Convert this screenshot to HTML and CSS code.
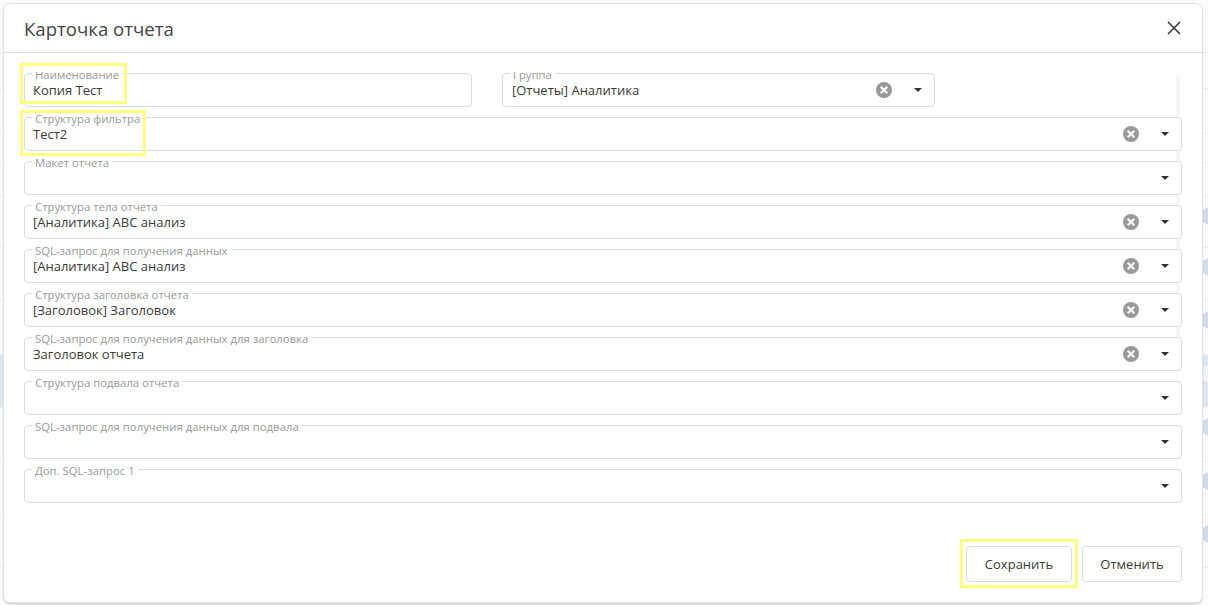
FILE: index.html
```html
<!DOCTYPE html>
<html lang="ru">
<head>
<meta charset="utf-8">
<title>Карточка отчета</title>
<link rel="stylesheet" href="styles.css">
</head>
<body>
<div class="backdrop">
  <div class="bg-row h53"></div><div class="bg-row h36"></div><div class="bg-row h45"></div><div class="bg-row h29"></div><div class="bg-row h34"></div>
  <div class="bg-row h51 dot"></div><div class="bg-row h53 dot"></div><div class="bg-row h54 dot"></div><div class="bg-row h53 band dot"></div><div class="bg-row h54 dot"></div><div class="bg-row h53 dot"></div><div class="bg-row h53 dot"></div>
</div>
<main class="dialog">
  <header class="dialog-head">
    <h1 class="dialog-title">Карточка отчета</h1>
    <svg class="close" width="14" height="14" viewBox="0 0 14 14"><path d="M1 1L13 13M13 1L1 13" fill="none" stroke="#333" stroke-width="1.5"/></svg>
  </header>
  <div class="dialog-body">
    <div class="scroll-track"></div>
    <div class="row">
      <div class="field name"><span class="label">Наименование</span><span class="value">Копия Тест</span></div>
      <div class="field group"><span class="label">Группа</span><span class="value">[Отчеты] Аналитика</span>
        <svg class="clear" width="16" height="16" viewBox="0 0 16 16"><circle cx="8" cy="8" r="8" fill="#999"/><path d="M4.7 4.7L11.3 11.3M11.3 4.7L4.7 11.3" stroke="#fff" stroke-width="2.2"/></svg>
        <svg class="arrow" width="8" height="4" viewBox="0 0 8 4"><path d="M0 0H8L4 4Z" fill="#333"/></svg>
      </div>
    </div>
    <div class="field"><span class="label">Структура фильтра</span><span class="value">Тест2</span>
      <svg class="clear" width="16" height="16" viewBox="0 0 16 16"><circle cx="8" cy="8" r="8" fill="#999"/><path d="M4.7 4.7L11.3 11.3M11.3 4.7L4.7 11.3" stroke="#fff" stroke-width="2.2"/></svg>
      <svg class="arrow" width="8" height="4" viewBox="0 0 8 4"><path d="M0 0H8L4 4Z" fill="#333"/></svg>
    </div>
    <div class="field"><span class="label">Макет отчета</span><span class="value"></span>
      <svg class="arrow" width="8" height="4" viewBox="0 0 8 4"><path d="M0 0H8L4 4Z" fill="#333"/></svg>
    </div>
    <div class="field"><span class="label">Структура тела отчета</span><span class="value">[Аналитика] ABC анализ</span>
      <svg class="clear" width="16" height="16" viewBox="0 0 16 16"><circle cx="8" cy="8" r="8" fill="#999"/><path d="M4.7 4.7L11.3 11.3M11.3 4.7L4.7 11.3" stroke="#fff" stroke-width="2.2"/></svg>
      <svg class="arrow" width="8" height="4" viewBox="0 0 8 4"><path d="M0 0H8L4 4Z" fill="#333"/></svg>
    </div>
    <div class="field"><span class="label">SQL-запрос для получения данных</span><span class="value">[Аналитика] ABC анализ</span>
      <svg class="clear" width="16" height="16" viewBox="0 0 16 16"><circle cx="8" cy="8" r="8" fill="#999"/><path d="M4.7 4.7L11.3 11.3M11.3 4.7L4.7 11.3" stroke="#fff" stroke-width="2.2"/></svg>
      <svg class="arrow" width="8" height="4" viewBox="0 0 8 4"><path d="M0 0H8L4 4Z" fill="#333"/></svg>
    </div>
    <div class="field"><span class="label">Структура заголовка отчета</span><span class="value">[Заголовок] Заголовок</span>
      <svg class="clear" width="16" height="16" viewBox="0 0 16 16"><circle cx="8" cy="8" r="8" fill="#999"/><path d="M4.7 4.7L11.3 11.3M11.3 4.7L4.7 11.3" stroke="#fff" stroke-width="2.2"/></svg>
      <svg class="arrow" width="8" height="4" viewBox="0 0 8 4"><path d="M0 0H8L4 4Z" fill="#333"/></svg>
    </div>
    <div class="field"><span class="label">SQL-запрос для получения данных для заголовка</span><span class="value">Заголовок отчета</span>
      <svg class="clear" width="16" height="16" viewBox="0 0 16 16"><circle cx="8" cy="8" r="8" fill="#999"/><path d="M4.7 4.7L11.3 11.3M11.3 4.7L4.7 11.3" stroke="#fff" stroke-width="2.2"/></svg>
      <svg class="arrow" width="8" height="4" viewBox="0 0 8 4"><path d="M0 0H8L4 4Z" fill="#333"/></svg>
    </div>
    <div class="field"><span class="label">Структура подвала отчета</span><span class="value"></span>
      <svg class="arrow" width="8" height="4" viewBox="0 0 8 4"><path d="M0 0H8L4 4Z" fill="#333"/></svg>
    </div>
    <div class="field"><span class="label">SQL-запрос для получения данных для подвала</span><span class="value"></span>
      <svg class="arrow" width="8" height="4" viewBox="0 0 8 4"><path d="M0 0H8L4 4Z" fill="#333"/></svg>
    </div>
    <div class="field"><span class="label">Доп. SQL-запрос 1</span><span class="value"></span>
      <svg class="arrow" width="8" height="4" viewBox="0 0 8 4"><path d="M0 0H8L4 4Z" fill="#333"/></svg>
    </div>
  </div>
  <footer class="dialog-foot">
    <button class="btn save" type="button">Сохранить</button>
    <button class="btn cancel" type="button">Отменить</button>
  </footer>
</main>
<div class="mark mark-name"></div>
<div class="mark mark-filter"></div>
<div class="mark mark-save"></div>
</body>
</html>
```
FILE: styles.css
```css
* { box-sizing: border-box; }
html, body { margin: 0; height: 605px; overflow: hidden; }
body {
  position: relative;
  padding: 4px 6px 3px 4px;
  background: #fbfbfb;
  font-family: "Open Sans", "Noto Sans", sans-serif;
  color: #333;
}
.backdrop { position: absolute; inset: 0; display: flex; flex-direction: column; }
.bg-row { flex: none; border-bottom: 1px solid #f0f0f0; position: relative; overflow: hidden; }
.h29 { height: 29px; } .h34 { height: 34px; } .h36 { height: 36px; } .h45 { height: 45px; }
.h51 { height: 51px; } .h53 { height: 53px; } .h54 { height: 54px; }
.band { background: #dde7f0; }
.dot::after {
  content: ""; position: absolute; left: 1201px; top: 10px;
  width: 18px; height: 18px; border-radius: 50%; background: #cfdce9;
}
.band.dot::after { background: #f2f5f8; }

.dialog {
  position: relative;
  height: 598px;
  background: #fff;
  border-radius: 6px;
  box-shadow: 0 0 0 1px #e2e2e2, 0 2px 3px rgba(0, 0, 0, .22);
  display: flex;
  flex-direction: column;
}
.dialog-head {
  flex: none;
  height: 49px;
  padding: 2px 21px 0 20px;
  border-bottom: 1px solid #ddd;
  display: flex;
  align-items: center;
  justify-content: space-between;
}
.dialog-title { margin: 0; font-size: 18.6px; font-weight: 400; color: #444; line-height: 1; }
.close { margin-top: -3px; }

.dialog-body {
  position: relative;
  flex: none;
  height: 441px;
  margin-top: 19px;
  padding: 1px 20px 0;
  overflow: hidden;
  display: flex;
  flex-direction: column;
  gap: 10px;
}
.scroll-track { position: absolute; left: 1172px; top: 3px; width: 4px; height: 266px; background: #f7f7f7; }
.row { display: flex; gap: 30px; position: relative; }
.field {
  position: relative;
  flex: none;
  height: 34px;
  display: flex;
  align-items: center;
  padding: 0 12px 0 8px;
  background: #fff;
  border: 1px solid #ddd;
  border-radius: 4px;
}
.field.name { width: 448px; }
.field.group { width: 433px; padding-left: 9px; }
.label {
  position: absolute; left: 7px; top: -5px;
  padding: 0 3px;
  background: #fff;
  font-size: 11.35px; line-height: 12px; color: #999;
  white-space: nowrap;
}
.value { flex: 1; font-size: 13px; line-height: 18px; color: #3a3a3a; margin-top: -1px; }
.clear { flex: none; margin-right: 22px; }
.arrow { flex: none; }

.dialog-foot {
  flex: none;
  display: flex;
  justify-content: flex-end;
  gap: 10px;
  padding: 33px 20px 0;
}
.btn {
  height: 36px;
  background: #fff;
  border: 1px solid #ddd;
  border-radius: 4px;
  font: 400 13px "Open Sans", "Noto Sans", sans-serif;
  color: #3a3a3a;
}
.save { width: 106px; }
.cancel { width: 100px; }

.mark { position: absolute; border: 3px solid #ffff80; }
.mark-name { left: 20px; top: 63px; width: 107px; height: 41px; }
.mark-filter { left: 20px; top: 110px; width: 126px; height: 46px; }
.mark-save { left: 960px; top: 539px; width: 118px; height: 49px; }
```
